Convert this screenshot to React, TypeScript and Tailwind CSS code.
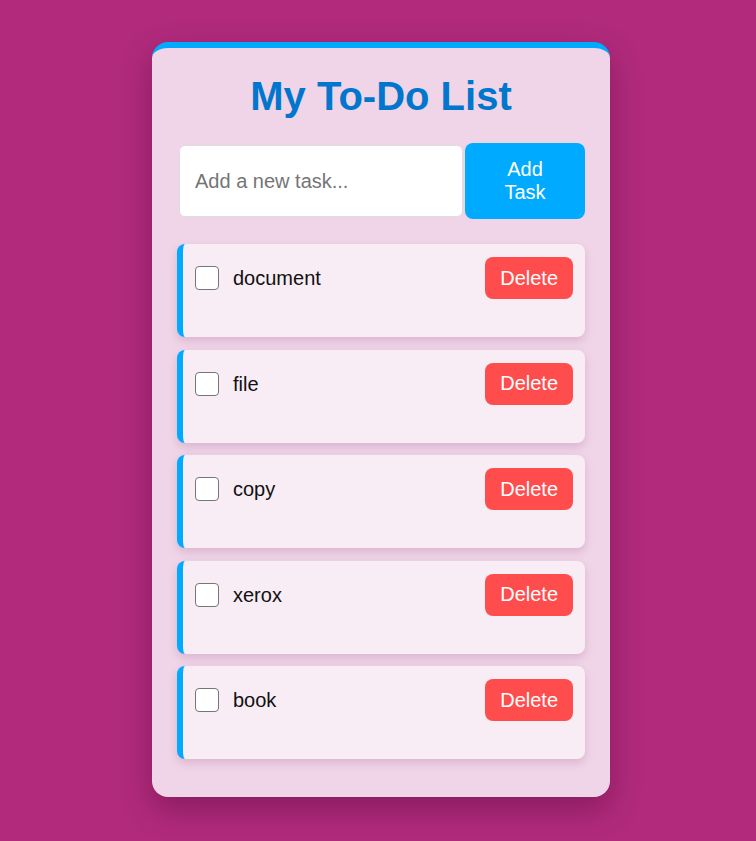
import React, { useState } from 'react';

type Task = { id: number; text: string; done: boolean };

const initialTasks: Task[] = [
  { id: 1, text: 'document', done: false },
  { id: 2, text: 'file', done: false },
  { id: 3, text: 'copy', done: false },
  { id: 4, text: 'xerox', done: false },
  { id: 5, text: 'book', done: false },
];

// Une tâche de la liste
const TaskItem: React.FC<{ task: Task; onToggle: () => void; onDelete: () => void }> = ({ task, onToggle, onDelete }) => {
  return (
    <li className="h-[93px] mb-[12.5px] bg-[#f8ecf5] rounded-lg border-l-[6px] border-[#00aaff] shadow-[0_4px_10px_rgba(120,40,90,0.18)]">
      <div className="flex items-center pl-3 pr-3 pt-[13px]">
        <input
          type="checkbox"
          checked={task.done}
          onChange={onToggle}
          className="appearance-none w-6 h-6 bg-white border border-[#767676] rounded-[4px] checked:bg-[#00aaff]"
        />
        <span className={`ml-[14px] flex-1 text-[20px] text-[#111] ${task.done ? 'line-through' : ''}`}>{task.text}</span>
        <button
          onClick={onDelete}
          className="bg-[#ff4d4d] text-white text-[20px] leading-[23px] px-[15px] py-[9.5px] rounded-lg"
        >
          Delete
        </button>
      </div>
    </li>
  );
};

export default function App() {
  const [tasks, setTasks] = useState<Task[]>(initialTasks);
  const [value, setValue] = useState('');

  const addTask = () => {
    if (!value.trim()) return;
    setTasks([...tasks, { id: Date.now(), text: value.trim(), done: false }]);
    setValue('');
  };

  return (
    <div className="min-h-[841px] bg-[#b12a7c] pt-[42px] pl-[6px] flex justify-center items-start font-['Liberation_Sans',Arial,sans-serif]">
      <div className="w-[458px] bg-[#f0d5e8] rounded-2xl border-t-[6px] border-[#00aaff] px-[25px] pt-[25px] pb-[25px] shadow-[0_12px_30px_rgba(60,0,40,0.35)]">
        <h1 className="text-center text-[40px] leading-[46px] font-bold text-[#0077cc]">My To-Do List</h1>

        <div className="flex mt-6 mb-[25px]">
          <input
            value={value}
            onChange={(e) => setValue(e.target.value)}
            placeholder="Add a new task..."
            className="flex-1 min-w-0 m-[2px] px-[15px] text-[20px] bg-white border border-[#ddd] rounded-md placeholder:text-[#757575] outline-none"
          />
          <button
            onClick={addTask}
            className="w-[120px] px-5 py-[15px] text-[20px] leading-[23px] text-white bg-[#00aaff] rounded-lg"
          >
            Add Task
          </button>
        </div>

        <ul>
          {tasks.map((t) => (
            <TaskItem
              key={t.id}
              task={t}
              onToggle={() => setTasks(tasks.map((x) => (x.id === t.id ? { ...x, done: !x.done } : x)))}
              onDelete={() => setTasks(tasks.filter((x) => x.id !== t.id))}
            />
          ))}
        </ul>
      </div>
    </div>
  );
}
